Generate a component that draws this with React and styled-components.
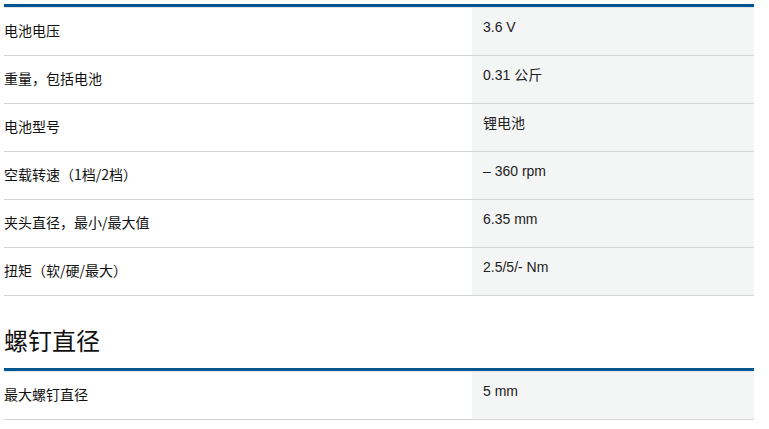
import React from 'react'
import styled, { createGlobalStyle } from 'styled-components'

const GlobalStyle = createGlobalStyle`
  body {
    margin: 0;
    background: #fff;
    font-family: "Liberation Sans", "Noto Sans CJK SC", Arial, sans-serif;
    color: #1a1a1a;
  }
`

const Page = styled.div`
  width: 750px;
  padding: 4px 0 0 4px;
`

const Table = styled.div`
  border-top: 3px solid #00578f;
  &::before {
    content: '';
    display: block;
    height: 1px;
    background: #e3e6e8;
  }
`

const Row = styled.div`
  display: grid;
  grid-template-columns: 468px 1fr;
  height: 47px;
  border-bottom: 1px solid #d3d3d3;
`

const Label = styled.div`
  display: flex;
  align-items: center;
  padding-bottom: 3px;
  font-family: "Noto Sans CJK SC", "Liberation Sans", sans-serif;
  font-size: 14px;
  color: #111;
`

const Value = styled.div`
  background: #f4f5f5;
  padding: 9px 11px 0;
  font-size: 14px;
  line-height: 20px;
  color: #222;
  font-family: "Liberation Sans", "Noto Sans CJK SC", sans-serif;
`

const Heading = styled.h2`
  margin: 29px 0 13px;
  font-family: "Noto Sans CJK SC", sans-serif;
  font-weight: 400;
  font-size: 24px;
  line-height: 30px;
  color: #111;
`

const specs = [
  ['电池电压', '3.6 V'],
  ['重量，包括电池', '0.31 公斤'],
  ['电池型号', '锂电池'],
  ['空载转速（1档/2档）', '– 360 rpm'],
  ['夹头直径，最小/最大值', '6.35 mm'],
  ['扭矩（软/硬/最大）', '2.5/5/- Nm'],
]

const screw = [['最大螺钉直径', '5 mm']]

function SpecTable({ rows }) {
  return (
    <Table>
      {rows.map(([k, v]) => (
        <Row key={k}>
          <Label>{k}</Label>
          <Value>{v}</Value>
        </Row>
      ))}
    </Table>
  )
}

export default function App() {
  return (
    <Page>
      <GlobalStyle />
      <SpecTable rows={specs} />
      <Heading>螺钉直径</Heading>
      <SpecTable rows={screw} />
    </Page>
  )
}
